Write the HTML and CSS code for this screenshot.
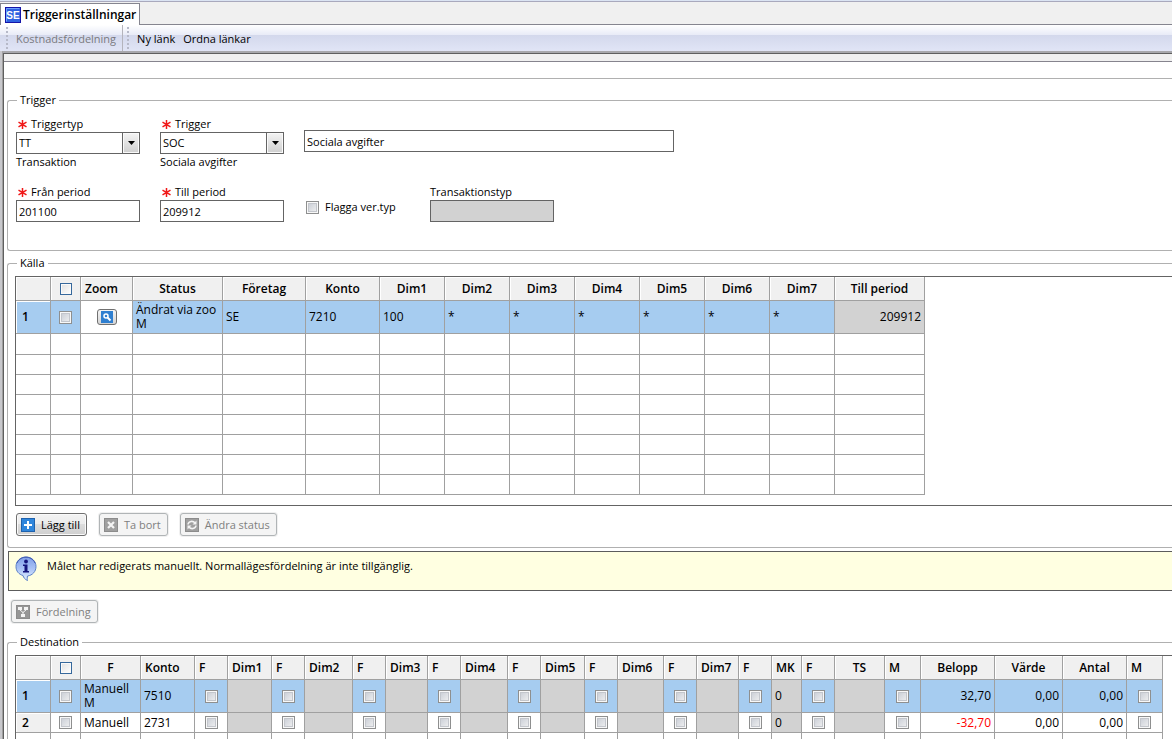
FILE: index.html
```html
<!DOCTYPE html>
<html lang="sv">
<head>
<meta charset="utf-8">
<title>Triggerinställningar</title>
<link rel="stylesheet" href="styles.css">
</head>
<body>
<div class="app">
  <header class="tabbar">
    <div class="tab">
      <svg class="tab-icon" width="16" height="16" viewBox="0 0 16 16" aria-hidden="true">
        <rect x=".5" y=".5" width="15" height="15" fill="#2f62e0" stroke="#1414a8"/>
        <path d="M1.500 14.500V1.500H14.500" fill="none" stroke="#6fa0ff"/>
        <text x="8" y="12" text-anchor="middle" class="tab-icon-text">SE</text>
      </svg>
      <span>Triggerinställningar</span>
    </div>
  </header>
  <nav class="toolbar">
    <div class="tool-group tool-first"><i class="grip"></i><button class="tool" disabled>Kostnadsfördelning</button></div>
    <div class="tool-group"><i class="grip"></i><button class="tool">Ny länk</button><button class="tool">Ordna länkar</button></div>
  </nav>
  <main class="panel">
    <div class="strip"></div>
    <div class="band"></div>

    <fieldset class="group group-trigger">
      <legend>Trigger</legend>
      <div class="fields">
        <div class="field">
          <label for="ttyp"><svg class="req" width="9" height="9" viewBox="0 0 9 9"><path d="M4.500 0V9M.5 2.200L8.500 6.800M8.500 2.200L.5 6.800"/></svg>Triggertyp</label>
          <div class="combo"><select id="ttyp"><option>TT</option></select><span class="arrow"><svg width="7" height="4"><path d="M0 0H7L3.500 4z"/></svg></span></div>
          <span class="hint">Transaktion</span>
        </div>
        <div class="field">
          <label for="trig"><svg class="req" width="9" height="9" viewBox="0 0 9 9"><path d="M4.500 0V9M.5 2.200L8.500 6.800M8.500 2.200L.5 6.800"/></svg>Trigger</label>
          <div class="combo"><select id="trig"><option>SOC</option></select><span class="arrow"><svg width="7" height="4"><path d="M0 0H7L3.500 4z"/></svg></span></div>
          <span class="hint">Sociala avgifter</span>
        </div>
        <input class="box wide" type="text" aria-label="Beskrivning" value="Sociala avgifter">
      </div>
      <div class="fields">
        <div class="field">
          <label for="from"><svg class="req" width="9" height="9" viewBox="0 0 9 9"><path d="M4.500 0V9M.5 2.200L8.500 6.800M8.500 2.200L.5 6.800"/></svg>Från period</label>
          <input class="box" id="from" type="text" value="201100">
        </div>
        <div class="field">
          <label for="to"><svg class="req" width="9" height="9" viewBox="0 0 9 9"><path d="M4.500 0V9M.5 2.200L8.500 6.800M8.500 2.200L.5 6.800"/></svg>Till period</label>
          <input class="box" id="to" type="text" value="209912">
        </div>
        <label class="flag"><input type="checkbox">Flagga ver.typ</label>
        <div class="field">
          <label class="plain" for="trtyp">Transaktionstyp</label>
          <input class="box" id="trtyp" type="text" disabled>
        </div>
      </div>
    </fieldset>

    <fieldset class="group group-source">
      <legend>Källa</legend>
      <div class="grid-box source-box">
        <table class="grid">
          <colgroup><col class="w35"><col class="w30"><col class="w52"><col class="w90"><col class="w83"><col class="w74"><col class="w65" span="7"><col class="w90"></colgroup>
          <thead>
            <tr><th></th><th><input class="all" type="checkbox" aria-label="Markera alla"></th><th class="l">Zoom</th><th>Status</th><th>Företag</th><th>Konto</th><th>Dim1</th><th>Dim2</th><th>Dim3</th><th>Dim4</th><th>Dim5</th><th>Dim6</th><th>Dim7</th><th>Till period</th></tr>
          </thead>
          <tbody>
            <tr class="sel"><th scope="row">1</th><td class="c"><input type="checkbox" aria-label="Rad 1"></td><td class="c w"><button class="zoom" aria-label="Zoom"><svg width="12" height="12" viewBox="0 0 12 12"><rect width="12" height="12" fill="#2f7fd0"/><circle cx="5" cy="5" r="2" fill="none" stroke="#fff" stroke-width="1.500"/><path d="M6.500 6.500L9.500 9.500" stroke="#fff" stroke-width="2"/></svg></button></td><td>Ändrat via zoo<br>M</td><td>SE</td><td>7210</td><td>100</td><td>*</td><td>*</td><td>*</td><td>*</td><td>*</td><td>*</td><td class="g r">209912</td></tr>
            <tr class="first-empty"><td></td><td></td><td></td><td></td><td></td><td></td><td></td><td></td><td></td><td></td><td></td><td></td><td></td><td></td></tr>
            <tr><td></td><td></td><td></td><td></td><td></td><td></td><td></td><td></td><td></td><td></td><td></td><td></td><td></td><td></td></tr>
            <tr><td></td><td></td><td></td><td></td><td></td><td></td><td></td><td></td><td></td><td></td><td></td><td></td><td></td><td></td></tr>
            <tr><td></td><td></td><td></td><td></td><td></td><td></td><td></td><td></td><td></td><td></td><td></td><td></td><td></td><td></td></tr>
            <tr><td></td><td></td><td></td><td></td><td></td><td></td><td></td><td></td><td></td><td></td><td></td><td></td><td></td><td></td></tr>
            <tr><td></td><td></td><td></td><td></td><td></td><td></td><td></td><td></td><td></td><td></td><td></td><td></td><td></td><td></td></tr>
            <tr><td></td><td></td><td></td><td></td><td></td><td></td><td></td><td></td><td></td><td></td><td></td><td></td><td></td><td></td></tr>
            <tr><td></td><td></td><td></td><td></td><td></td><td></td><td></td><td></td><td></td><td></td><td></td><td></td><td></td><td></td></tr>
          </tbody>
        </table>
      </div>
      <div class="actions">
        <button class="btn"><svg width="14" height="14" viewBox="0 0 14 14"><rect x=".5" y=".5" width="13" height="13" fill="#2f86dc" stroke="#1f62ad"/><path d="M7 3V11M3 7H11" stroke="#fff" stroke-width="2"/></svg>Lägg till</button>
        <button class="btn" disabled><svg width="14" height="14" viewBox="0 0 14 14"><rect x=".5" y=".5" width="13" height="13" fill="#a0a0a0" stroke="#8c8c8c"/><path d="M4 4L10 10M10 4L4 10" stroke="#f4f4f4" stroke-width="2.200"/></svg>Ta bort</button>
        <button class="btn" disabled><svg width="14" height="14" viewBox="0 0 14 14"><rect x=".5" y=".5" width="13" height="13" fill="#a0a0a0" stroke="#8c8c8c"/><path d="M3 6.500C3.500 3 8 2.500 10 5M11 7.500C10.500 11 6 11.500 4 9" fill="none" stroke="#f4f4f4" stroke-width="1.600"/><path d="M11.500 2.500V6.500H7.500zM2.500 11.500V7.500H6.500z" fill="#f4f4f4"/></svg>Ändra status</button>
      </div>
    </fieldset>

    <div class="notice">
      <svg width="22" height="26" viewBox="0 0 22 26" aria-hidden="true">
        <defs><linearGradient id="bubble" x1="0" y1="0" x2="0" y2="1"><stop offset="0" stop-color="#7f9fe8"/><stop offset=".5" stop-color="#a9c2f6"/><stop offset="1" stop-color="#e4f2ff"/></linearGradient></defs>
        <path d="M11 1C5.300 1 1 5.200 1 10.500C1 15.200 3.800 18.300 8 19.500C8.500 21.500 10 23.500 12.500 24.500C12 23 12.200 21.300 12.500 20C17.500 19.300 21 15.500 21 10.500C21 5.200 16.700 1 11 1Z" fill="url(#bubble)" stroke="#5a7fc8"/>
        <path d="M2 7C4 2.500 8 1.200 11 1.200S18 2.500 20 7" fill="none" stroke="#3f57b0"/>
        <circle cx="11" cy="5.500" r="1.900" fill="#14147c"/>
        <path d="M8 8.500H12.500V15H14V16.500H8V15H9.500V10H8z" fill="#14147c"/>
      </svg>
      <p>Målet har redigerats manuellt. Normallägesfördelning är inte tillgänglig.</p>
    </div>

    <div class="distribute">
      <button class="btn" disabled><svg width="14" height="14" viewBox="0 0 14 14"><rect x=".5" y=".5" width="13" height="13" fill="#969696" stroke="#8c8c8c"/><path d="M2 2H6V5H2zM8 2H12V5H8zM5 9H9V12H5z" fill="#f4f4f4"/><path d="M4 5L7 7.500L10 5M7 7V9" fill="none" stroke="#f4f4f4"/></svg>Fördelning</button>
    </div>

    <fieldset class="group group-dest">
      <legend>Destination</legend>
      <div class="grid-box">
        <table class="grid">
          <colgroup><col class="w35"><col class="w30"><col class="w60"><col class="w54"><col class="w33"><col class="w44"><col class="w33"><col class="w48"><col class="w33"><col class="w42"><col class="w33"><col class="w47"><col class="w33"><col class="w44"><col class="w33"><col class="w46"><col class="w33"><col class="w42"><col class="w33"><col class="w30"><col class="w33"><col class="w50"><col class="w36"><col class="w74"><col class="w68"><col class="w64"><col class="w36"></colgroup>
          <thead>
            <tr><th></th><th><input class="all" type="checkbox" aria-label="Markera alla"></th><th>F</th><th class="l">Konto</th><th class="l">F</th><th class="l">Dim1</th><th class="l">F</th><th class="l">Dim2</th><th class="l">F</th><th class="l">Dim3</th><th class="l">F</th><th class="l">Dim4</th><th class="l">F</th><th class="l">Dim5</th><th class="l">F</th><th class="l">Dim6</th><th class="l">F</th><th class="l">Dim7</th><th class="l">F</th><th class="l">MK</th><th class="l">F</th><th>TS</th><th class="l">M</th><th>Belopp</th><th>Värde</th><th>Antal</th><th class="l">M</th></tr>
          </thead>
          <tbody>
            <tr class="sel"><th scope="row">1</th><td class="c"><input type="checkbox" aria-label="Rad 1"></td><td>Manuell<br>M</td><td>7510</td><td class="c"><input type="checkbox" aria-label="F"></td><td class="g"></td><td class="c"><input type="checkbox" aria-label="F Dim1"></td><td class="g"></td><td class="c"><input type="checkbox" aria-label="F Dim2"></td><td class="g"></td><td class="c"><input type="checkbox" aria-label="F Dim3"></td><td class="g"></td><td class="c"><input type="checkbox" aria-label="F Dim4"></td><td class="g"></td><td class="c"><input type="checkbox" aria-label="F Dim5"></td><td class="g"></td><td class="c"><input type="checkbox" aria-label="F Dim6"></td><td class="g"></td><td class="c"><input type="checkbox" aria-label="F Dim7"></td><td class="g">0</td><td class="c"><input type="checkbox" aria-label="F MK"></td><td class="g"></td><td class="c"><input type="checkbox" aria-label="M TS"></td><td class="r">32,70</td><td class="r">0,00</td><td class="r">0,00</td><td class="c"><input type="checkbox" aria-label="M"></td></tr>
            <tr><th scope="row">2</th><td class="c"><input type="checkbox" aria-label="Rad 2"></td><td>Manuell</td><td>2731</td><td class="c"><input type="checkbox" aria-label="F"></td><td class="g"></td><td class="c"><input type="checkbox" aria-label="F Dim1"></td><td class="g"></td><td class="c"><input type="checkbox" aria-label="F Dim2"></td><td class="g"></td><td class="c"><input type="checkbox" aria-label="F Dim3"></td><td class="g"></td><td class="c"><input type="checkbox" aria-label="F Dim4"></td><td class="g"></td><td class="c"><input type="checkbox" aria-label="F Dim5"></td><td class="g"></td><td class="c"><input type="checkbox" aria-label="F Dim6"></td><td class="g"></td><td class="c"><input type="checkbox" aria-label="F Dim7"></td><td class="g">0</td><td class="c"><input type="checkbox" aria-label="F MK"></td><td class="g"></td><td class="c"><input type="checkbox" aria-label="M TS"></td><td class="r neg">-32,70</td><td class="r">0,00</td><td class="r">0,00</td><td class="c"><input type="checkbox" aria-label="M"></td></tr>
            <tr><td></td><td></td><td></td><td></td><td></td><td></td><td></td><td></td><td></td><td></td><td></td><td></td><td></td><td></td><td></td><td></td><td></td><td></td><td></td><td></td><td></td><td></td><td></td><td></td><td></td><td></td><td></td></tr>
          </tbody>
        </table>
      </div>
    </fieldset>
  </main>
</div>
</body>
</html>
```
FILE: styles.css
```css
* { box-sizing: border-box; }

body {
  margin: 0;
  background: #fff;
  color: #000;
  font: 11px/16px "Open Sans", "Noto Sans", sans-serif;
}
button, input, select { font: inherit; color: inherit; }

.app {
  display: flex;
  flex-direction: column;
  height: 100vh;
  overflow: hidden;
  border-top: 1px solid #dbe4f3;
}

/* Document tabs */
.tabbar {
  flex: none;
  display: flex;
  height: 24px;
  padding-top: 1px;
  border-top: 1px solid #a9a9bd;
  background: #f0f0f0;
  box-shadow: inset 0 -1px #85858f;
}
.tab {
  display: flex;
  align-items: center;
  gap: 2px;
  padding: 0 3px 0 4px;
  border: 1px solid #85858f;
  border-bottom: 0;
  background: #fff;
  font-size: 12px;
  font-weight: 600;
}
.tab-icon-text { font: 700 10px "Liberation Sans", sans-serif; fill: #fff; }

/* Toolbar */
.toolbar {
  flex: none;
  display: flex;
  height: 26px;
  padding-left: 6px;
  background: linear-gradient(#fff, #e8ebf7 10px, #d3d8ec 10px, #e1e5f6);
}
.tool-group { display: flex; align-items: center; }
.tool-first { margin-right: 4px; border-right: 1px solid #b4b4bc; }
.grip {
  align-self: stretch;
  width: 2px;
  margin: 2px 4px 0 0;
  background: repeating-linear-gradient(#b6b9c8 0 2px, transparent 2px 4px);
}
.tool { padding: 2px 4px 0; border: 0; background: none; }
.tool:disabled { color: #7a7a80; }
.tool-first .tool { padding-right: 6px; }

/* Work area */
.panel {
  flex: 1;
  min-height: 0;
  margin-left: 2px;
  border-top: 2px solid #a8a8ac;
  border-left: 1px solid #a0a0a0;
  box-shadow: inset 1px 1px #5f5f5f, -2px 0 #c8c8cc;
}
.strip { height: 9px; margin: 0 0 0 1px; border-top: 1px solid #5f5f5f; border-bottom: 1px solid #86848e; background: #f0f0f0; }
.band { height: 17px; margin-left: 1px; border-bottom: 1px solid #b0b0b0; }

.group {
  min-width: 0;
  margin: 0 0 0 4px;
  padding: 0 0 0 8px;
  border: 1px solid #b0b0b0;
  border-right: 0;
  border-radius: 3px 0 0 3px;
}
.group legend { height: 18px; margin-left: 1px; padding: 0 3px; line-height: 18px; }
.group-trigger { display: block; margin-top: 12px; padding-bottom: 28px; }
.group-source { margin-top: 3px; padding-bottom: 11px; }
.group-dest { margin-top: 10px; border-bottom: 0; }

/* Form fields */
.fields { display: flex; gap: 20px; padding-top: 7px; }
.fields + .fields { padding-top: 14px; }
.field { display: flex; flex-direction: column; width: 124px; }
.field label { display: flex; align-items: center; gap: 4px; height: 16px; padding-left: 2px; }
.field .plain { padding-left: 0; }
.req { fill: none; stroke: #f01818; stroke-width: 1.5; }
.box, .combo select {
  width: 100%;
  height: 22px;
  padding: 0 2px;
  border: 1px solid #646464;
  border-radius: 0;
  background: #fff;
}
.box:disabled { background: #d2d2d2; }
.wide { width: 370px; margin-top: 14px; }
.combo { position: relative; }
.combo select { display: block; appearance: none; }
.arrow {
  position: absolute;
  top: 0;
  right: 0;
  display: grid;
  place-items: center;
  width: 18px;
  height: 22px;
  border: 1px solid #646464;
  box-shadow: inset 0 0 0 1px #fafafa;
  background: linear-gradient(#f4f4f4, #cfcfcf);
  pointer-events: none;
}
.flag { display: flex; align-items: center; gap: 6px; width: 104px; height: 16px; margin: 15px 0 0 2px; white-space: nowrap; }

input[type="checkbox"] {
  flex: none;
  display: block;
  appearance: none;
  width: 13px;
  height: 13px;
  margin: 0 auto;
  border: 1px solid #8e8f8f;
  background: linear-gradient(135deg, #c4c9d2, #f4f4f4);
  box-shadow: inset 0 0 0 1px #f8f8f8, inset 0 0 0 2px #c3c6cc;
}
.flag input[type="checkbox"] { margin: 0; }
input[type="checkbox"].all {
  width: 12px;
  height: 12px;
  border-color: #36689c;
  background: linear-gradient(135deg, #e0e0e0, #fff);
  box-shadow: inset 0 0 0 1px #fafafa;
}

/* Data grids */
.grid-box { border-top: 1px solid #646464; border-left: 1px solid #646464; }
.group .grid-box { margin: 4px 0 0 -1px; }
.source-box { padding-bottom: 10px; border-bottom: 1px solid #646464; }
.grid { width: 0; table-layout: fixed; border-collapse: separate; border-spacing: 0; font-size: 12px; }
.grid th, .grid td {
  height: 20px;
  padding: 0 3px;
  border-right: 1px solid #a0a0a0;
  border-bottom: 1px solid #a0a0a0;
  line-height: 14px;
  text-align: left;
  white-space: nowrap;
}
.grid thead th {
  height: 24px;
  background: #f0f0f0;
  box-shadow: inset 1px 1px #fff;
  font-weight: 600;
  text-align: center;
}
.grid thead .l { padding-left: 4px; text-align: left; }
.grid tbody th { padding-left: 6px; background: #f0f0f0; box-shadow: inset 1px 1px #fff; font-weight: 600; }
.grid .sel th, .grid .sel td { height: 33px; background: #a6ccf0; }
.grid .first-empty td { height: 21px; }
.grid .c { text-align: center; }
.grid .r { text-align: right; }
.grid .g, .grid .sel .g { background: #d2d2d2; }
.grid .sel .w { background: #fff; }
.grid .neg { color: #f00; }
.w30 { width: 30px; } .w33 { width: 33px; } .w35 { width: 35px; } .w36 { width: 36px; }
.w42 { width: 42px; } .w44 { width: 44px; } .w46 { width: 46px; } .w47 { width: 47px; }
.w48 { width: 48px; } .w50 { width: 50px; } .w52 { width: 52px; } .w54 { width: 54px; }
.w60 { width: 60px; } .w64 { width: 64px; } .w65 { width: 65px; } .w68 { width: 68px; }
.w74 { width: 74px; } .w83 { width: 83px; } .w90 { width: 90px; }

.zoom {
  display: grid;
  place-items: center;
  width: 20px;
  height: 16px;
  margin: 0 auto;
  padding: 0;
  border: 1px solid #707070;
  border-radius: 3px;
  background: linear-gradient(#f4f4f4, #d4d4d4);
}

/* Buttons */
.actions { display: flex; gap: 12px; padding-top: 7px; }
.btn {
  display: flex;
  align-items: center;
  gap: 6px;
  height: 23px;
  padding: 0 6px 0 4px;
  border: 1px solid #707070;
  border-radius: 3px;
  background: linear-gradient(#f3f3f3, #ebebeb 50%, #dcdcdc 50%, #cfcfcf);
  box-shadow: inset 0 0 0 1px #fafafa;
  white-space: nowrap;
}
.btn:disabled { border-color: #b0b4b6; background: #f4f4f4; color: #808080; box-shadow: 0 0 0 1px #f0f0f0; }
.distribute { display: flex; padding: 9px 0 0 8px; }

/* Notice */
.notice {
  display: flex;
  gap: 10px;
  height: 40px;
  margin: 3px 0 0 5px;
  padding: 4px 6px;
  border: 1px solid #5c5c5c;
  border-right: 0;
  background: #ffffe1;
}
.notice p { margin: 2px 0 0; }
```
